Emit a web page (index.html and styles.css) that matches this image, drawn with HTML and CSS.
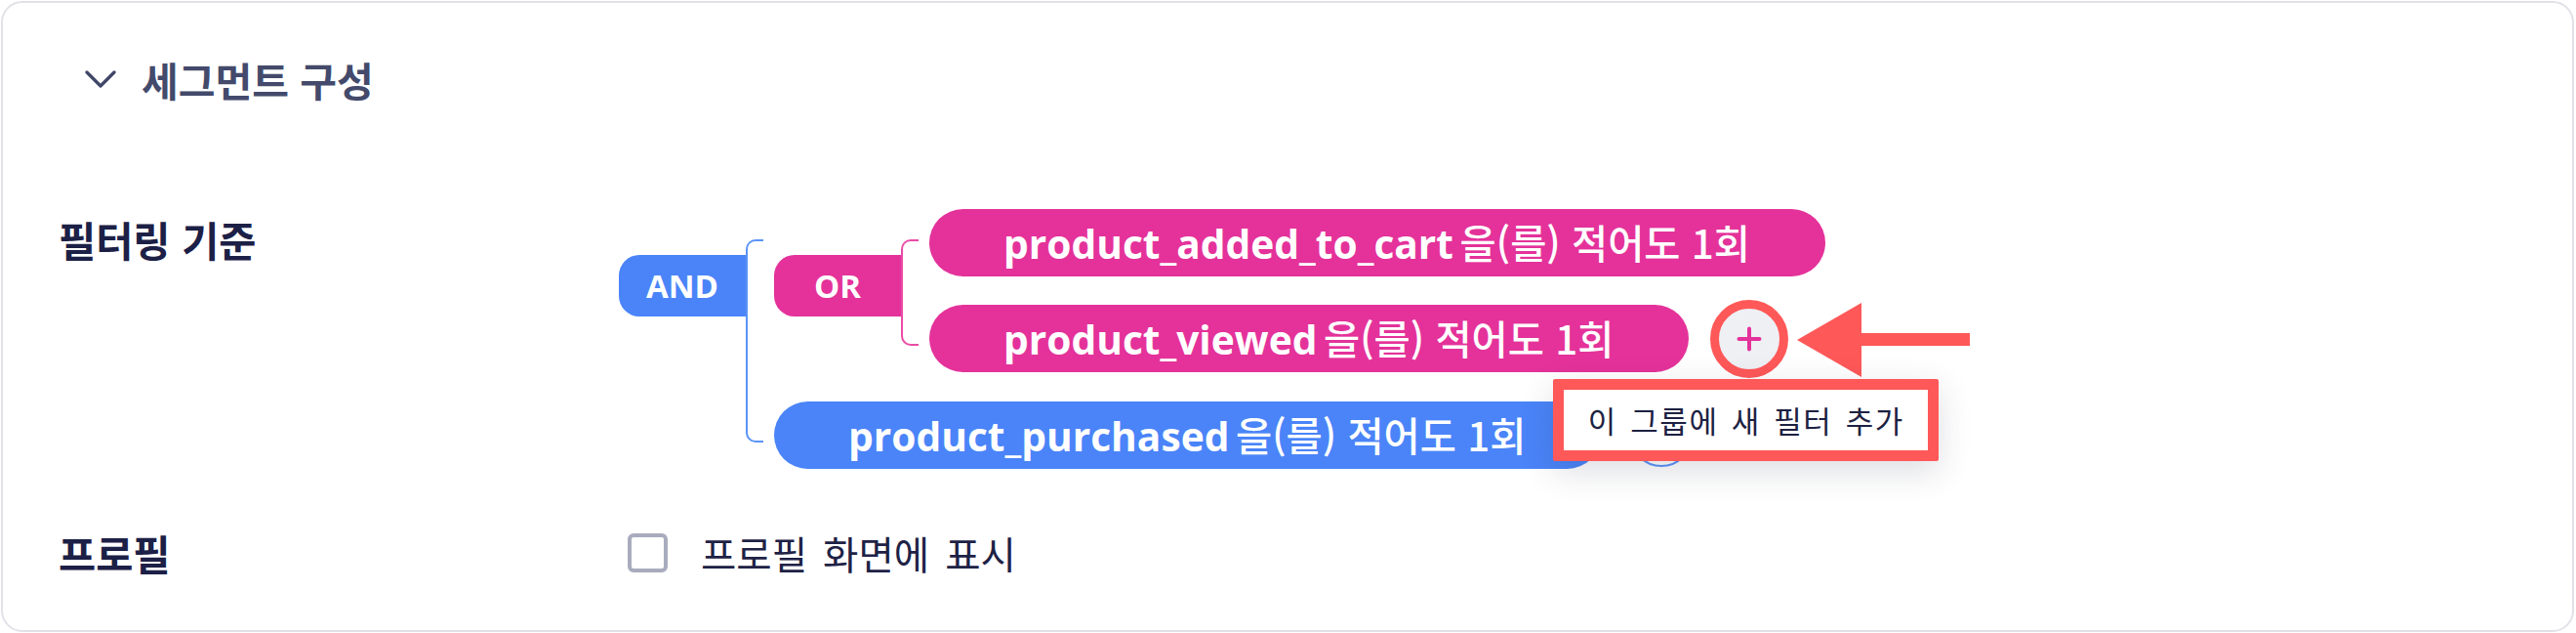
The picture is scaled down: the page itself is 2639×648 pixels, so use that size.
FILE: index.html
```html
<!DOCTYPE html>
<html lang="ko">
<head>
<meta charset="utf-8">
<title>세그먼트 구성</title>
<link rel="stylesheet" href="styles.css">
</head>
<body>
<div class="card">
  <div class="section-head">
    <svg class="chevron" width="32" height="18" viewBox="0 0 32 18"><path d="M2 2 L16 16 L30 2" fill="none" stroke="#3f4668" stroke-width="3.2" stroke-linecap="round" stroke-linejoin="round"/></svg>
    <h2 class="section-title">세그먼트 구성</h2>
  </div>

  <div class="row row-filter">
    <div class="row-label label-filter">필터링 기준</div>
    <div class="row-body">
      <div class="group">
        <div class="op op-and">AND</div>
        <div class="bracket bracket-and"></div>
        <div class="children children-and">
          <div class="group">
            <div class="op op-or">OR</div>
            <div class="bracket bracket-or"></div>
            <div class="children children-or">
              <div class="filter-line">
                <span class="pill pill-pink"><span class="pill-text"><span class="ev">product_added_to_cart</span> <span class="cond">을(를) 적어도 1회</span></span></span>
              </div>
              <div class="filter-line">
                <span class="pill pill-pink"><span class="pill-text"><span class="ev">product_viewed</span> <span class="cond">을(를) 적어도 1회</span></span></span>
                <div class="add-btn add-pink">
                  <svg width="26" height="26" viewBox="0 0 26 26"><path d="M13 2.5 V23.5 M2.5 13 H23.5" stroke="#e4329a" stroke-width="4" stroke-linecap="round"/></svg>
                  <span class="mark-ring"></span>
                  <svg class="mark-arrow" width="178" height="78" viewBox="0 0 178 78"><polygon points="0,39 66,1 66,77" fill="#ff5858"/><rect x="64" y="32" width="113" height="13" fill="#ff5858"/></svg>
                  <div class="tooltip">이 그룹에 새 필터 추가</div>
                </div>
              </div>
            </div>
          </div>
          <div class="filter-line">
            <span class="pill pill-blue"><span class="pill-text"><span class="ev">product_purchased</span> <span class="cond">을(를) 적어도 1회</span></span></span>
            <div class="add-btn add-blue">
              <svg width="26" height="26" viewBox="0 0 26 26"><path d="M13 2.5 V23.5 M2.5 13 H23.5" stroke="#4a84f8" stroke-width="4" stroke-linecap="round"/></svg>
            </div>
          </div>
        </div>
      </div>
    </div>
  </div>

  <div class="row row-profile">
    <div class="row-label">프로필</div>
    <label class="check"><span class="check-box"></span><span class="check-text">프로필 화면에 표시</span></label>
  </div>
</div>
</body>
</html>
```

FILE: styles.css
```css
html, body {
  margin: 0;
  background: #ffffff;
  overflow: hidden;
}

body {
  font-family: "Noto Sans CJK KR", "Noto Sans", sans-serif;
  color: #1c2046;
}

.card {
  box-sizing: border-box;
  margin: 1px 0 0 1px;
  width: 2636px;
  height: 646px;
  border: 2px solid #e1e2e8;
  border-radius: 22px;
  padding: 48px 0 0 57px;
}

.section-head {
  display: flex;
  align-items: center;
  gap: 26px;
  height: 60px;
  padding-left: 27px;
}

.chevron {
  display: block;
}

.section-title {
  margin: 0;
  font-size: 41px;
  font-weight: 600;
  line-height: 1;
  color: #434a6b;
}

.row {
  display: grid;
  grid-template-columns: 574px auto;
}

.row-filter {
  margin-top: 103px;
}

.row-label {
  font-size: 41.5px;
  font-weight: 700;
  line-height: 46px;
  color: #1c2046;
}

.label-filter {
  margin-top: 8px;
}

.group {
  display: flex;
  align-items: flex-start;
}

.op {
  box-sizing: border-box;
  width: 130px;
  height: 63px;
  margin-top: 47px;
  border-radius: 21px 0 0 21px;
  display: flex;
  align-items: center;
  justify-content: center;
  font-family: "Open Sans", sans-serif;
  font-weight: 700;
  font-size: 33px;
  color: #ffffff;
}

.op-and { background: #4a84f8; }
.op-or { background: #e4329a; }

.bracket {
  align-self: stretch;
  box-sizing: border-box;
  width: 18px;
  margin: 31px 11px 27px 0;
  border: 2px solid;
  border-right: none;
  border-radius: 10px 0 0 10px;
}

.bracket-and { border-color: #5b94fa; }
.bracket-or { border-color: #ea4ba6; }

.children {
  display: flex;
  flex-direction: column;
  align-items: flex-start;
}

.children-and { gap: 30px; }
.children-or { gap: 29px; }

.filter-line {
  display: flex;
  align-items: center;
  gap: 30px;
}

.pill {
  box-sizing: border-box;
  height: 69px;
  padding: 0 77px 2px 76px;
  border-radius: 35px;
  display: inline-flex;
  align-items: center;
  color: #ffffff;
}

.pill-text {
  white-space: nowrap;
  font-family: "Open Sans", "Noto Sans CJK KR", sans-serif;
  font-size: 40.7px;
  word-spacing: -4px;
}

.pill-pink { background: #e4329a; }
.pill-blue { background: #4a84f8; }

.ev {
  font-weight: 700;
}

.cond {
  font-family: "Noto Sans CJK KR", sans-serif;
  font-weight: 500;
  font-size: 40.4px;
  word-spacing: 0;
}

.add-btn {
  position: relative;
  box-sizing: border-box;
  width: 64px;
  height: 64px;
  border-radius: 50%;
  display: flex;
  align-items: center;
  justify-content: center;
  flex: none;
}

.add-btn svg {
  display: block;
}

.add-pink {
  background: #eef0f4;
}

.add-blue {
  background: #ffffff;
  border: 2px solid #5b94fa;
}

.mark-ring {
  position: absolute;
  left: -8px;
  top: -8px;
  width: 80px;
  height: 80px;
  box-sizing: border-box;
  border: 9px solid #ff5858;
  border-radius: 50%;
}

.mark-arrow {
  position: absolute;
  left: 81px;
  top: -6px;
}

.tooltip {
  position: absolute;
  left: -169px;
  top: 73px;
  z-index: 5;
  box-sizing: border-box;
  width: 395px;
  height: 84px;
  border: 11px solid #ff5858;
  border-radius: 2px;
  background: #ffffff;
  box-shadow: 0 10px 34px rgba(40, 44, 70, 0.16);
  display: flex;
  align-items: center;
  justify-content: center;
  white-space: nowrap;
  font-size: 31px;
  font-weight: 400;
  letter-spacing: 1.6px;
  word-spacing: 3px;
  color: #1d2142;
}

.row-profile {
  margin-top: 57px;
  align-items: center;
}

.check {
  display: flex;
  align-items: center;
  gap: 34px;
  margin-left: 9px;
}

.check-box {
  box-sizing: border-box;
  width: 41px;
  height: 40px;
  border: 4px solid #a9acbd;
  border-radius: 6px;
  flex: none;
}

.check-text {
  font-size: 39.5px;
  font-weight: 400;
  color: #1e2245;
  word-spacing: 5px;
}
```
